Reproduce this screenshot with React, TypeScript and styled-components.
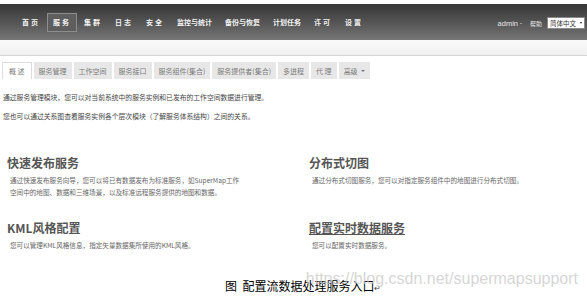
import React from "react";
import styled, { createGlobalStyle, css } from "styled-components";

const GlobalStyle = createGlobalStyle`
  html, body {
    margin: 0;
    padding: 0;
    background: #fff;
  }
  body {
    font-family: "Liberation Sans", "Noto Sans CJK SC", sans-serif;
  }
`;

const navItems = [
  { label: "首页", spaced: true },
  { label: "服务", spaced: true, active: true },
  { label: "集群", spaced: true },
  { label: "日志", spaced: true },
  { label: "安全", spaced: true },
  { label: "监控与统计" },
  { label: "备份与恢复" },
  { label: "计划任务" },
  { label: "许可", spaced: true },
  { label: "设置", spaced: true },
];

const tabs = [
  { label: "概 述", active: true },
  { label: "服务管理" },
  { label: "工作空间" },
  { label: "服务接口" },
  { label: "服务组件(集合)" },
  { label: "服务提供者(集合)" },
  { label: "多进程" },
  { label: "代 理" },
  { label: "高级", caret: true },
];

const features = [
  {
    title: "快速发布服务",
    lines: [
      "通过快速发布服务向导，您可以将已有数据发布为标准服务，如SuperMap工作",
      "空间中的地图、数据和三维场景，以及标准远程服务提供的地图和数据。",
    ],
  },
  {
    title: "分布式切图",
    lines: ["通过分布式切图服务，您可以对指定服务组件中的地图进行分布式切图。"],
  },
  {
    title: "KML风格配置",
    lines: ["您可以管理KML风格信息，指定矢量数据集所使用的KML风格。"],
  },
  {
    title: "配置实时数据服务",
    lines: ["您可以配置实时数据服务。"],
    hovered: true,
  },
];

export default function App() {
  return (
    <>
      <GlobalStyle />
      <S.Page>
        <S.NavBar>
          <S.NavList>
            {navItems.map((item) => (
              <S.NavItem key={item.label} $active={item.active} $spaced={item.spaced}>
                {item.label}
              </S.NavItem>
            ))}
          </S.NavList>
          <S.NavRight>
            <S.User>
              admin <S.SmallCaret />
            </S.User>
            <S.Help>帮助</S.Help>
            <S.LangSelect>
              简体中文
              <S.SelectArrow />
            </S.LangSelect>
          </S.NavRight>
        </S.NavBar>
        <S.SubBar />

        <S.Tabs>
          {tabs.map((tab) => (
            <S.Tab key={tab.label} $active={tab.active}>
              {tab.label}
              {tab.caret && <S.TabCaret />}
            </S.Tab>
          ))}
        </S.Tabs>

        <S.Intro>
          通过服务管理模块，您可以对当前系统中的服务实例和已发布的工作空间数据进行管理。
        </S.Intro>
        <S.Intro>
          您也可以通过关系图查看服务实例各个层次模块（了解服务体系结构）之间的关系。
        </S.Intro>

        <S.Features>
          {features.map((f) => (
            <S.Feature key={f.title}>
              <S.FeatureTitle $hovered={f.hovered}>{f.title}</S.FeatureTitle>
              {f.lines.map((line) => (
                <S.FeatureText key={line}>{line}</S.FeatureText>
              ))}
            </S.Feature>
          ))}
        </S.Features>

        <S.Caption>
          图&nbsp;&nbsp;配置流数据处理服务入口<S.ReturnMark>↵</S.ReturnMark>
        </S.Caption>
        <S.Watermark>https://blog.csdn.net/supermapsupport</S.Watermark>
      </S.Page>
    </>
  );
}

const S = {
  Page: styled.div`
    position: relative;
    width: 587px;
    height: 297px;
    padding-top: 4px;
    box-sizing: border-box;
    display: flex;
    flex-direction: column;
    overflow: hidden;
  `,
  NavBar: styled.div`
    height: 36px;
    display: flex;
    align-items: center;
    padding: 0 2px 0 16px;
    background: linear-gradient(#363636, #575757 55%, #777);
  `,
  NavList: styled.div`
    display: flex;
    align-items: center;
    gap: 1px;
  `,
  NavItem: styled.div<{ $active?: boolean; $spaced?: boolean }>`
    height: 19px;
    box-sizing: border-box;
    display: flex;
    align-items: center;
    padding: 0 5px;
    font-family: "Noto Sans CJK SC", sans-serif;
    font-size: 7px;
    font-weight: 700;
    color: #f2f2f2;
    border: 1px solid transparent;
    ${(p) =>
      p.$spaced &&
      css`
        letter-spacing: 2px;
      `}
    ${(p) =>
      p.$active &&
      css`
        border-color: #8d8d8d;
        background: #5e5e5e;
      `}
  `,
  NavRight: styled.div`
    margin-left: auto;
    display: flex;
    align-items: center;
    padding-top: 2px;
  `,
  User: styled.span`
    display: flex;
    align-items: center;
    gap: 2px;
    font-size: 7.5px;
    color: #e6e6e6;
  `,
  SmallCaret: styled.span`
    width: 0;
    height: 0;
    border-left: 1.5px solid transparent;
    border-right: 1.5px solid transparent;
    border-top: 1.5px solid #ddd;
  `,
  Help: styled.span`
    margin-left: 8px;
    font-family: "Noto Sans CJK SC", sans-serif;
    font-size: 6px;
    color: #e6e6e6;
  `,
  LangSelect: styled.div`
    margin-left: 5px;
    width: 38px;
    height: 12px;
    box-sizing: border-box;
    display: flex;
    align-items: center;
    justify-content: space-between;
    padding: 0 2px;
    background: #fff;
    border: 1px solid #8a8a8a;
    font-family: "Noto Sans CJK SC", sans-serif;
    font-size: 6.5px;
    color: #333;
  `,
  SelectArrow: styled.span`
    width: 0;
    height: 0;
    border-left: 1.5px solid transparent;
    border-right: 1.5px solid transparent;
    border-top: 2.5px solid #222;
  `,
  SubBar: styled.div`
    height: 15px;
    background: linear-gradient(#fafafa, #f0f0f0);
    border-bottom: 1px solid #d4d4d4;
  `,
  Tabs: styled.div`
    display: flex;
    gap: 2px;
    margin-top: 6px;
    padding-left: 2px;
  `,
  Tab: styled.div<{ $active?: boolean }>`
    height: 17px;
    box-sizing: border-box;
    display: flex;
    align-items: center;
    gap: 3px;
    padding: 0 5px;
    font-family: "Noto Sans CJK SC", sans-serif;
    font-size: 7px;
    color: #7a7a7a;
    background: #e7e7e7;
    ${(p) =>
      p.$active &&
      css`
        background: #fff;
        border: 1px solid #dcdcdc;
        border-bottom: none;
        padding: 0 6px;
      `}
  `,
  TabCaret: styled.span`
    width: 0;
    height: 0;
    border-left: 2px solid transparent;
    border-right: 2px solid transparent;
    border-top: 2px solid #777;
  `,
  Intro: styled.p`
    margin: 12px 0 -5px 3px;
    font-family: "Noto Sans CJK SC", sans-serif;
    font-size: 6.8px;
    line-height: 12px;
    color: #444;
  `,
  Features: styled.div`
    display: grid;
    grid-template-columns: 302px 1fr;
    row-gap: 22px;
    margin-top: 38px;
    padding-left: 7px;
  `,
  Feature: styled.div`
    display: flex;
    flex-direction: column;
  `,
  FeatureTitle: styled.div<{ $hovered?: boolean }>`
    font-family: "Noto Sans CJK SC", sans-serif;
    font-size: 12px;
    line-height: 16px;
    font-weight: 700;
    color: #555;
    margin-bottom: 3px;
    ${(p) =>
      p.$hovered &&
      css`
        text-decoration: underline;
        text-underline-offset: 1px;
      `}
  `,
  FeatureText: styled.div`
    padding-left: 3px;
    font-family: "Noto Sans CJK SC", sans-serif;
    font-size: 6.6px;
    line-height: 12px;
    color: #666;
    white-space: nowrap;
  `,
  Caption: styled.div`
    margin-top: auto;
    margin-bottom: 1px;
    padding-left: 225px;
    font-family: "Noto Sans CJK SC", sans-serif;
    font-size: 12px;
    line-height: 16px;
    color: #000;
  `,
  ReturnMark: styled.span`
    font-size: 8px;
    color: #444;
  `,
  Watermark: styled.div`
    position: absolute;
    right: 9px;
    top: 270px;
    font-family: "Liberation Sans", sans-serif;
    font-size: 16px;
    color: rgba(200, 200, 200, 0.75);
    pointer-events: none;
  `,
};
